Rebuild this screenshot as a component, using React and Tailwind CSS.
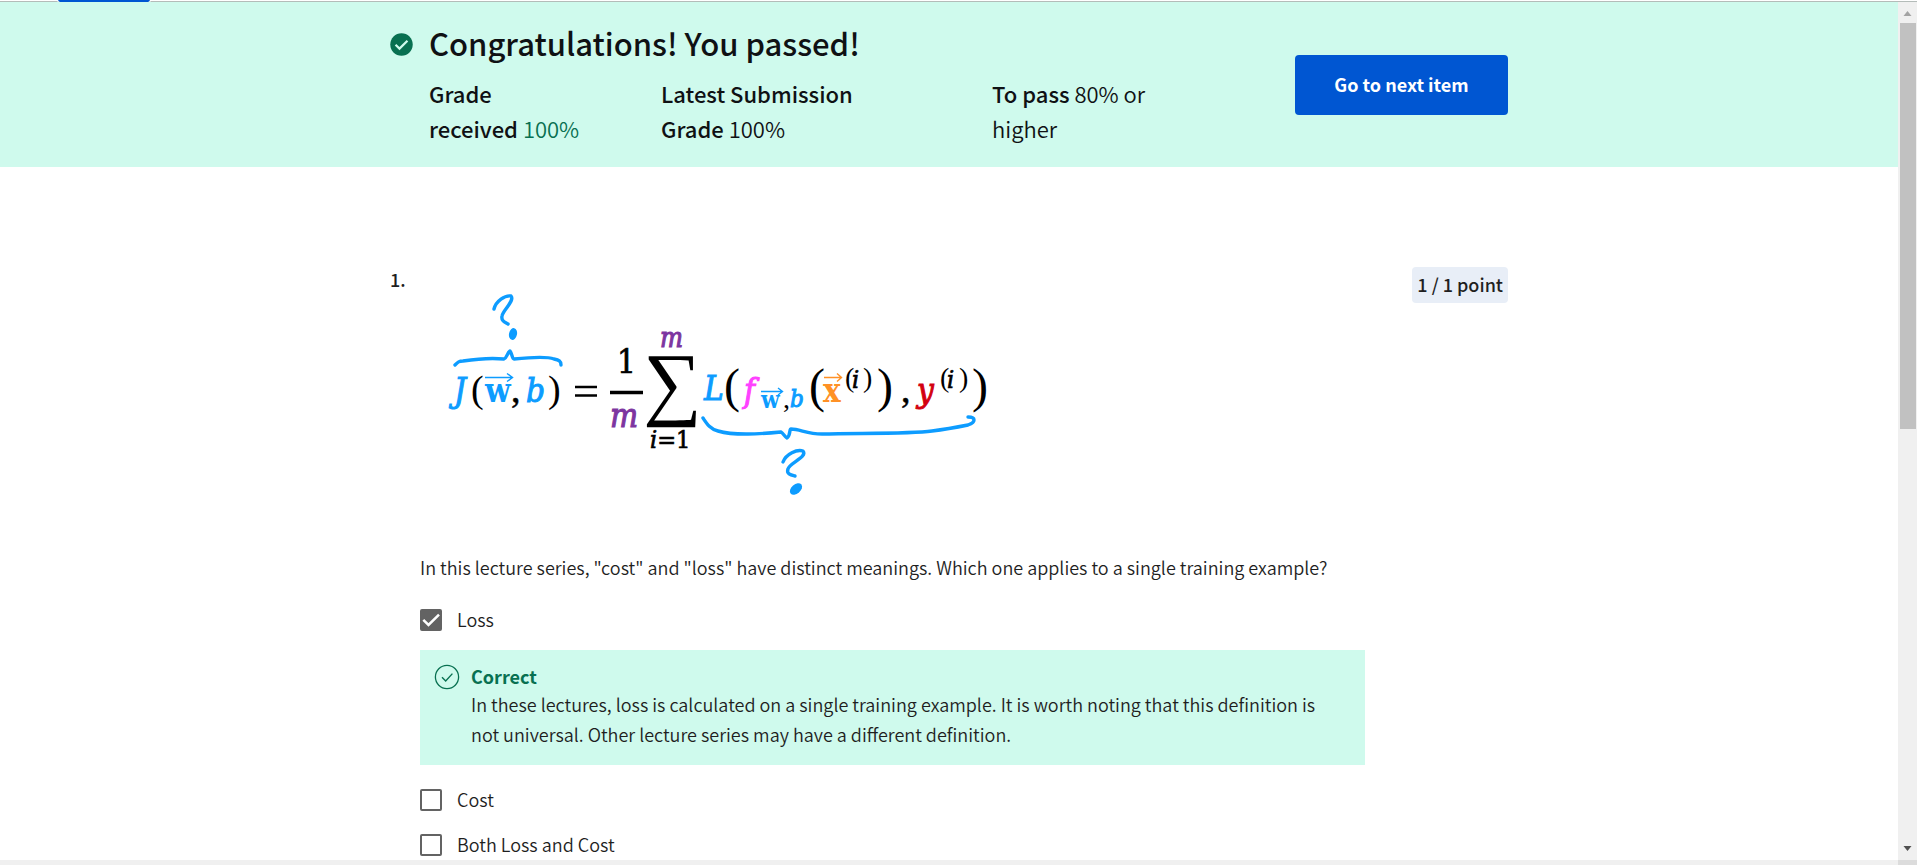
import React from "react";

function CheckSolid() {
  return (
    <svg viewBox="0 0 24 24" className="size-[23px] shrink-0" aria-hidden="true">
      <circle cx="12" cy="12" r="11.7" fill="#087051" />
      <path d="M5.8 12.2 L9.9 16.3 L18.2 8" fill="none" stroke="#cffaed" strokeWidth="2.3" />
    </svg>
  );
}

function CheckOutline() {
  return (
    <svg viewBox="0 0 26 26" className="size-[26px] shrink-0" fill="none" stroke="#087051" aria-hidden="true">
      <circle cx="13" cy="13" r="11.6" strokeWidth="1.3" />
      <path d="M8 13.2 L11.7 16.9 L18.4 9.6" strokeWidth="1.4" />
    </svg>
  );
}

function Formula() {
  const blue = "#0d9cff";
  const violet = "#7d35a0";
  return (
    <svg
      viewBox="0 0 600 230"
      className="block h-[230px] w-[600px] max-w-full"
      role="img"
      aria-label="Cost function formula"
      fontFamily="'DejaVu Serif Condensed', 'DejaVu Serif', serif"
      fontSize="33"
      fontWeight="400"
      fill="#000"
    >
      <g fill="none" stroke={blue} strokeWidth="3.4" strokeLinecap="round" strokeLinejoin="round">
        <path d="M74 29 C76 21 85 15 91 16 C95 21 83 30 82 36 C81 41 85 42 88 44" />
        <path d="M35 85 C38 82 39 81 43 81 C56 79 74 78 84 79 C87 78 87 73 90 71 C92 73 92 79 94 79 C104 78 126 76 134 79 C139 80 141 81 141 85" />
        <path d="M283 138 C287 144 290 149 298 151 C315 156 340 154 361 152 C363 153 365 157 367 158 C371 155 369 149 371 149 C380 149 387 154 402 154 C440 153 490 154 512 151 C528 149 538 147 548 145 C556 142 556 137 548 137" />
        <path d="M363 182 C366 174 377 169 383 171 C388 177 369 183 368 189 C366 194 371 195 375 196" />
      </g>
      <ellipse cx="93" cy="54" rx="4" ry="6" transform="rotate(12 93 54)" fill={blue} />
      <ellipse cx="376" cy="209" rx="7" ry="4.6" transform="rotate(-40 376 209)" fill={blue} />

      <g fill="none" stroke={blue} strokeWidth="1.4">
        <path d="M65 97.500 H92 M87 93.500 L92.500 97.500 L87 101.500" />
        <path d="M341 111.500 H362 M358 108 L362.500 111.500 L358 115" />
        <path d="M404 97.500 H421 M417 93.500 L421.500 97.500 L417 101.500" stroke="#ff9126" />
      </g>

      <g fontStyle="italic" fill={blue} stroke={blue} strokeWidth="1">
        <text x="34" y="122">J</text>
        <text x="106" y="122">b</text>
        <text x="284" y="120">L</text>
        <text x="370" y="127" fontSize="24">b</text>
      </g>
      <g fontWeight="700" fill={blue}>
        <text x="65" y="122">w</text>
        <text x="341" y="128" fontSize="24">w</text>
        <text x="403" y="122" fill="#ff9126">x</text>
      </g>
      <g fontStyle="italic" fill={violet} stroke={violet} strokeWidth="1">
        <text x="190" y="147">m</text>
        <text x="240" y="67" fontSize="27">m</text>
      </g>
      <text x="324" y="122" fontStyle="italic" fill="#ff40ff" stroke="#ff40ff">f</text>
      <text x="497" y="122" fontStyle="italic" fill="#d3000f" stroke="#d3000f">y</text>

      <g stroke="#000" strokeWidth="0.7">
        <text x="197" y="93">1</text>
        <text x="230" y="168" fontSize="25"><tspan fontStyle="italic">i</tspan>=1</text>
        <text x="432" y="108" fontSize="25" fontStyle="italic">i</text>
        <text x="527" y="108" fontSize="25" fontStyle="italic">i</text>
      </g>

      <g fontFamily="'Liberation Serif', serif" fontSize="38">
        <text x="51" y="122">(</text>
        <text x="91" y="122" stroke="#000" strokeWidth="0.5">,</text>
        <text x="128" y="122">)</text>
        <text x="223" y="130" fontSize="82">∑</text>
        <text x="304" y="122" fontSize="48">(</text>
        <text x="363" y="128" fontSize="28">,</text>
        <text x="389" y="122" fontSize="48">(</text>
        <text x="425" y="107" fontSize="28">(</text>
        <text x="443" y="107" fontSize="28">)</text>
        <text x="457" y="122" fontSize="48">)</text>
        <text x="481" y="122" stroke="#000" strokeWidth="0.5">,</text>
        <text x="520" y="107" fontSize="28">(</text>
        <text x="539" y="107" fontSize="28">)</text>
        <text x="552" y="122" fontSize="48">)</text>
      </g>
      <path d="M155 107 H177 M155 115.500 H177" stroke="#000" strokeWidth="2.4" />
      <path d="M190 112.500 H223" stroke="#000" strokeWidth="3.4" />
    </svg>
  );
}

function Option({ id, label, checked }) {
  return (
    <div className="flex h-6 items-center gap-[15px]">
      <span className="relative flex size-[22px] shrink-0">
        <input
          id={id}
          type="checkbox"
          defaultChecked={checked}
          className="peer size-[22px] appearance-none rounded-[2px] border-2 border-[#636363] bg-white checked:bg-[#636363]"
        />
        <svg
          viewBox="0 0 22 22"
          className="pointer-events-none absolute inset-0 hidden size-[22px] peer-checked:block"
          aria-hidden="true"
        >
          <path d="M3.300 10.800 L8.500 16 L19 5.600" fill="none" stroke="#fff" strokeWidth="2.500" />
        </svg>
      </span>
      <label htmlFor={id} className="pb-0.5">{label}</label>
    </div>
  );
}

function Scrollbar() {
  return (
    <div className="flex w-[19px] shrink-0 flex-col items-center bg-[#f0f0f0]" aria-hidden="true">
      <svg viewBox="0 0 19 21" className="h-[21px] w-[19px] shrink-0">
        <path d="M5.500 14 L9.500 9 L13.500 14 Z" fill="#a3a3a3" />
      </svg>
      <div className="h-[406px] w-4 shrink-0 bg-[#c1c1c1]" />
      <div className="flex-1" />
      <svg viewBox="0 0 19 21" className="h-[21px] w-[19px] shrink-0">
        <path d="M5.500 7 L9.500 12 L13.500 7 Z" fill="#505050" />
      </svg>
    </div>
  );
}

export default function App() {
  return (
    <div className="flex h-screen flex-col overflow-hidden bg-white font-['Noto_Sans_CJK_SC',sans-serif] text-[18px] leading-[30px] font-[350] text-[#1f1f1f]">
      <div className="flex h-0.5 shrink-0 border-b border-[#b4bcb9] pl-[58px]">
        <div className="h-0.5 w-[92px] rounded-b-[2px] bg-[#0056d2] outline-1 outline-white" />
      </div>
      <div className="flex min-h-0 flex-1">
        <div className="min-w-0 flex-1 overflow-hidden">
          <header className="bg-[#cffaed] pt-[18px] pb-[21px] text-[#0f1114]">
            <div className="mx-auto flex max-w-[1118px] items-start justify-between">
              <div className="flex gap-4">
                <div className="flex h-[49px] items-center">
                  <CheckSolid />
                </div>
                <div>
                  <h1 className="text-[31px] leading-[45px] font-medium">Congratulations! You passed!</h1>
                  <div className="flex pt-[11px] text-[22px] leading-[35px]">
                    <p className="w-[232px] pr-20"><span className="font-medium">Grade received</span> <span className="text-[#087051]">100%</span></p>
                    <p className="w-[331px] pr-28"><span className="font-medium">Latest Submission Grade</span> 100%</p>
                    <p className="w-[180px]"><span className="font-medium">To pass</span> 80% or higher</p>
                  </div>
                </div>
              </div>
              <button type="button" className="mt-[35px] h-[60px] w-[213px] rounded-[4px] bg-[#0056d2] pb-0.5 text-[18px] font-bold text-white">
                Go to next item
              </button>
            </div>
          </header>

          <main className="mx-auto flex max-w-[1118px] items-start pt-[100px]">
            <span className="w-[30px] shrink-0 leading-6 font-medium">1.</span>
            <div className="min-w-0 flex-1 pt-[13px]">
              <Formula />
              <p className="mt-[42px]">In this lecture series, "cost" and "loss" have distinct meanings. Which one applies to a single training example?</p>
              <div className="flex flex-col pt-[26px]">
                <Option id="loss" label="Loss" checked />
                <div className="mt-[18px] mb-[23px] flex w-[945px] max-w-full gap-[11px] bg-[#cffaed] pt-[14px] pr-10 pb-4 pl-[14px]">
                  <CheckOutline />
                  <div>
                    <p className="leading-[25px] font-bold text-[#087051]">Correct</p>
                    <p>In these lectures, loss is calculated on a single training example. It is worth noting that this definition is not universal. Other lecture series may have a different definition.</p>
                  </div>
                </div>
                <div className="flex flex-col gap-[21px]">
                  <Option id="cost" label="Cost" />
                  <Option id="both" label="Both Loss and Cost" />
                </div>
              </div>
            </div>
            <span className="-ml-24 shrink-0 rounded-[4px] bg-[#e8eef7] px-[5px] pt-0.5 pb-1 font-medium">1 / 1 point</span>
          </main>
        </div>
        <Scrollbar />
      </div>
      <div className="flex h-[5px] shrink-0 justify-end bg-[#f0f0f0]">
        <div className="w-[19px] bg-[#dcdcdc]" />
      </div>
    </div>
  );
}
